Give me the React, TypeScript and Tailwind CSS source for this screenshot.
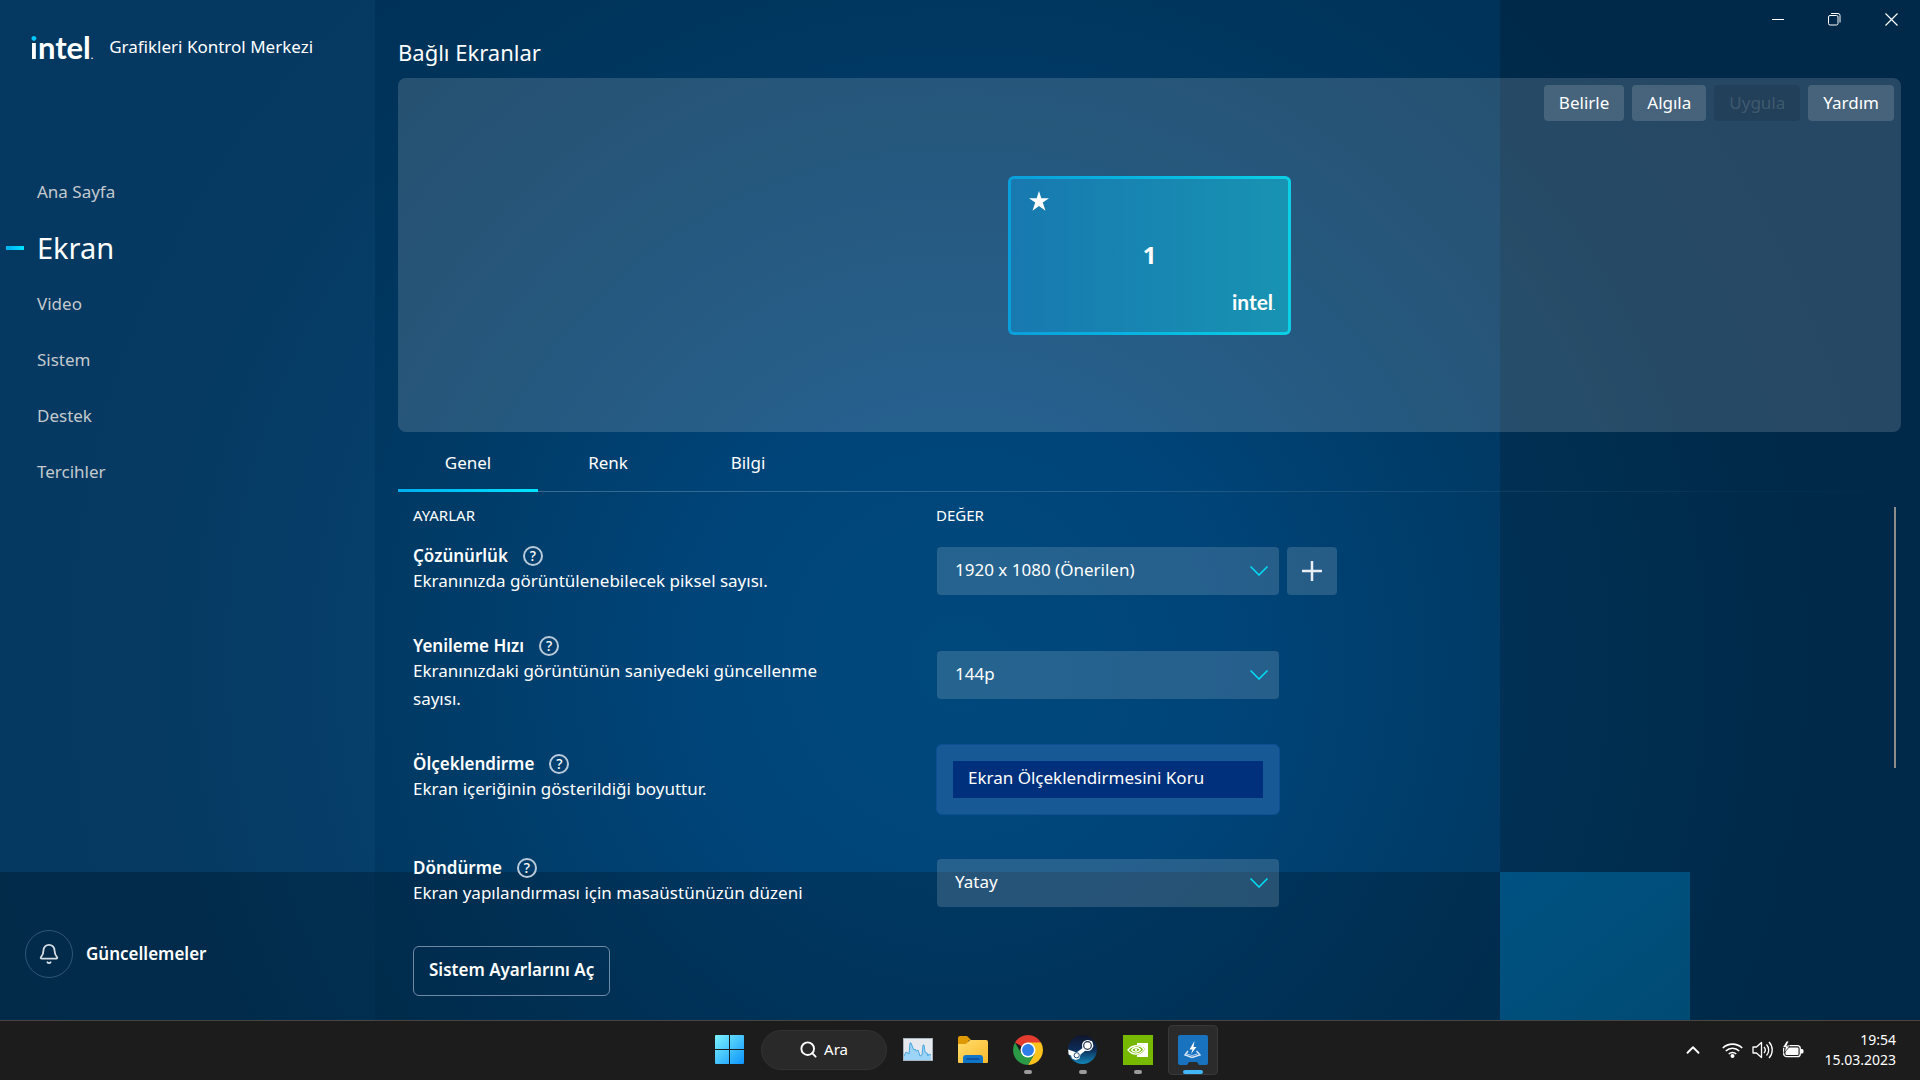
import type { ReactNode } from "react"
import { Bell, ChevronUp, Search } from "lucide-react"

type SettingRowProps = {
  id: string
  title: string
  description: string
  children: ReactNode
}

type SettingSelectProps = {
  id: string
  options: string[]
}

const NAV_ITEMS = ["Ana Sayfa", "Ekran", "Video", "Sistem", "Destek", "Tercihler"]
const TABS = ["Genel", "Renk", "Bilgi"]

function IntelLogo({ small = false }: { small?: boolean }) {
  if (small) {
    return (
      <span className="font-['Lato'] text-[21px] leading-5 font-bold text-white">
        intel<span className="text-[8px] leading-none">.</span>
      </span>
    )
  }

  return (
    <span className="font-['Lato'] text-[31px] leading-8 font-bold text-white">
      <span className="bg-[linear-gradient(#00c7fd_0_14px,#fff_14px)] bg-clip-text text-transparent">
        i
      </span>
      ntel<span className="text-[10px] leading-none">.</span>
    </span>
  )
}

function Sidebar() {
  return (
    <aside className="flex w-[375px] shrink-0 flex-col bg-[linear-gradient(rgba(30,90,140,0.18)_85.5%,rgba(30,90,140,0.06)_85.5%)]">
      <div className="mt-[31px] flex h-8 items-center gap-4 pl-[30px]">
        <IntelLogo />
        <span className="text-[17px] text-white">Grafikleri Kontrol Merkezi</span>
      </div>

      <nav className="mt-[101px]">
        {NAV_ITEMS.map((item) =>
          item === "Ekran" ? (
            <a
              key={item}
              href="#ekran"
              aria-current="page"
              className="flex h-14 items-center gap-[13px] pl-[6px] text-[29px] text-white"
            >
              <span className="h-1 w-[18px] bg-linear-to-r from-[#00aeef] to-[#00e5ff]" />
              {item}
            </a>
          ) : (
            <a
              key={item}
              href={`#${item}`}
              className="flex h-14 items-center pl-[37px] text-[17px] text-[#c4c9ce]"
            >
              {item}
            </a>
          ),
        )}
      </nav>

      <button
        type="button"
        className="mt-auto mb-[42px] ml-[25px] flex items-center gap-[13px] text-[17px] font-semibold text-white"
      >
        <span className="flex size-12 items-center justify-center rounded-full border border-[#2f5478]">
          <Bell className="size-[22px] text-[#d5dce3]" strokeWidth={2} />
        </span>
        Güncellemeler
      </button>
    </aside>
  )
}

function WindowControls() {
  return (
    <div className="flex text-white">
      <button type="button" aria-label="Simge durumuna küçült" className="flex h-[38px] w-[57px] items-center justify-center">
        <svg width="12" height="12" viewBox="0 0 12 12" stroke="currentColor">
          <path d="M0 6.5H12" />
        </svg>
      </button>
      <button type="button" aria-label="Geri yükle" className="flex h-[38px] w-[57px] items-center justify-center">
        <svg width="13" height="13" viewBox="0 0 13 13" fill="none" stroke="currentColor">
          <rect x="0.5" y="2.5" width="9.5" height="9.5" rx="1.5" />
          <path d="M3 0.5h7a2 2 0 0 1 2 2v7" />
        </svg>
      </button>
      <button type="button" aria-label="Kapat" className="flex h-[38px] w-[57px] items-center justify-center">
        <svg width="13" height="13" viewBox="0 0 13 13" stroke="currentColor" strokeWidth="1.2">
          <path d="M0.5 0.5l12 12M12.5 0.5l-12 12" />
        </svg>
      </button>
    </div>
  )
}

function DisplayPanel() {
  return (
    <section className="relative mr-[19px] ml-[23px] flex h-[354px] items-center justify-center rounded-lg bg-white/15">
      <div className="absolute top-[7px] right-[7px] flex gap-2 text-[17px] text-white">
        <button type="button" className="h-9 rounded bg-white/15 px-[15px]">
          Belirle
        </button>
        <button type="button" className="h-9 rounded bg-white/15 px-[15px]">
          Algıla
        </button>
        <button type="button" disabled className="h-9 rounded bg-black/10 px-[15px] text-white/15">
          Uygula
        </button>
        <button type="button" className="h-9 rounded bg-white/15 px-[15px]">
          Yardım
        </button>
      </div>

      <button
        type="button"
        className="h-[159px] w-[283px] rounded-md bg-linear-to-r from-[#0a9fdc] to-[#0cd0e6] p-[3px]"
      >
        <span className="flex h-full flex-col justify-between rounded-[3px] bg-linear-to-r from-[#1879b0] to-[#1893b2] px-[13px] pt-3 pb-5">
          <svg width="20" height="20" viewBox="0 0 20 20" fill="#fff" className="ml-[5px]">
            <path d="M10 0l2.3 7.2H20l-6.2 4.4 2.7 8.1L10 15l-6.5 4.7 2.7-8.1L0 7.2h7.7z" />
          </svg>
          <span className="pt-2 text-center text-2xl font-bold text-white">1</span>
          <span className="flex h-5 justify-end">
            <IntelLogo small />
          </span>
        </span>
      </button>
    </section>
  )
}

function TabBar() {
  return (
    <div className="relative mr-[19px] ml-[23px] flex h-[60px]">
      <div className="absolute right-0 bottom-0 left-0 h-px bg-linear-to-r from-white/25 to-white/0" />
      {TABS.map((tab, index) => (
        <button key={tab} type="button" className="relative w-[140px] pt-[2px] text-[17px] text-white">
          {tab}
          {index === 0 && (
            <span className="absolute right-0 bottom-0 left-0 h-[3px] bg-linear-to-r from-[#00aeef] to-[#00e5ff]" />
          )}
        </button>
      ))}
    </div>
  )
}

function SettingRow({ id, title, description, children }: SettingRowProps) {
  return (
    <div className="flex h-20 items-center">
      <div className="w-[523px] shrink-0 pr-[100px] pb-[2px]">
        <div className="flex h-[22px] items-center gap-[15px]">
          <label htmlFor={id} className="text-[17px] font-semibold">
            {title}
          </label>
          <button
            type="button"
            aria-label={`${title} yardım`}
            className="flex size-5 items-center justify-center rounded-full border-2 border-[#b9cbdb] text-sm leading-none font-medium"
          >
            ?
          </button>
        </div>
        <p className="text-[17px] leading-7">{description}</p>
      </div>
      {children}
    </div>
  )
}

function SettingSelect({ id, options }: SettingSelectProps) {
  return (
    <div className="relative w-[342px]">
      <select
        id={id}
        className="h-12 w-full appearance-none rounded bg-white/15 pr-12 pb-[2px] pl-[18px] text-[17px] text-white"
      >
        {options.map((option) => (
          <option key={option} className="bg-[#00307c]">
            {option}
          </option>
        ))}
      </select>
      <svg
        width="18"
        height="10"
        viewBox="0 0 18 10"
        fill="none"
        stroke="#00e0f8"
        strokeWidth="1.5"
        className="pointer-events-none absolute top-[19px] right-[11px]"
      >
        <path d="M0.5 0.5L9 9l8.5-8.5" />
      </svg>
    </div>
  )
}

function Settings() {
  return (
    <div className="flex flex-1">
      <div className="flex-1 pl-[38px] text-white">
        <div className="mt-[9px] flex h-[30px] items-center pb-[2px] text-[15px]">
          <span className="w-[523px]">AYARLAR</span>
          <span>DEĞER</span>
        </div>

        <div className="flex flex-col gap-6">
          <SettingRow
            id="resolution"
            title="Çözünürlük"
            description="Ekranınızda görüntülenebilecek piksel sayısı."
          >
            <div className="ml-px flex gap-2">
              <SettingSelect id="resolution" options={["1920 x 1080 (Önerilen)"]} />
              <button
                type="button"
                aria-label="Özel çözünürlük ekle"
                className="flex h-12 w-[50px] items-center justify-center rounded bg-white/15"
              >
                <svg width="20" height="20" viewBox="0 0 20 20" stroke="#e8eef4" strokeWidth="2.5">
                  <path d="M10 0v20M0 10h20" />
                </svg>
              </button>
            </div>
          </SettingRow>

          <SettingRow
            id="refresh"
            title="Yenileme Hızı"
            description="Ekranınızdaki görüntünün saniyedeki güncellenme sayısı."
          >
            <div className="ml-px">
              <SettingSelect id="refresh" options={["144p"]} />
            </div>
          </SettingRow>

          <SettingRow
            id="scaling"
            title="Ölçeklendirme"
            description="Ekran içeriğinin gösterildiği boyuttur."
          >
            <div className="w-[344px] rounded-md border border-[#0d4f95] bg-[#165995] p-4">
              <select
                id="scaling"
                className="block h-[37px] w-full appearance-none bg-[#00307c] pb-[2px] pl-[15px] text-[17px] text-white"
              >
                <option>Ekran Ölçeklendirmesini Koru</option>
              </select>
            </div>
          </SettingRow>

          <SettingRow
            id="rotation"
            title="Döndürme"
            description="Ekran yapılandırması için masaüstünüzün düzeni"
          >
            <div className="ml-px">
              <SettingSelect id="rotation" options={["Yatay"]} />
            </div>
          </SettingRow>
        </div>

        <button
          type="button"
          className="mt-[23px] mb-6 h-[50px] rounded-md border border-[#6f8aa5] px-[15px] pb-[2px] text-[17px] font-semibold"
        >
          Sistem Ayarlarını Aç
        </button>
      </div>

      {/* scrollbar thumb */}
      <div className="mt-[15px] mr-6 h-[261px] w-[2px] bg-[#8f8d8b]" />
    </div>
  )
}

function WindowsIcon() {
  return (
    <svg width="29" height="29" viewBox="0 0 29 29">
      <defs>
        <linearGradient id="win" x1="0" y1="0" x2="1" y2="1" gradientUnits="objectBoundingBox">
          <stop offset="0" stopColor="#7df3ff" />
          <stop offset="1" stopColor="#0c94fb" />
        </linearGradient>
      </defs>
      <path fill="url(#win)" d="M1 0h13v14H0V1a1 1 0 0 1 1-1zM15 0h13a1 1 0 0 1 1 1v13H15zM0 15h14v14H1a1 1 0 0 1-1-1zM15 15h14v13a1 1 0 0 1-1 1H15z" />
    </svg>
  )
}

function MonitorIcon() {
  return (
    <svg width="30" height="23" viewBox="0 0 30 23">
      <rect width="30" height="23" fill="#a9b3bc" />
      <rect x="1" y="1" width="28" height="21" fill="#e6eaef" />
      <path d="M1 22v-4l2-4 2 1 1 1 1-11h1l2 5 1 2 1-1 1 2 2-1 1 3 1 3 2-1 1-10h1l1 7 2 1 1 3 1-2 2 1v5z" fill="#9bd4f7" />
      <path d="M1 18l2-4 2 1 1 1 1-11h1l2 5 1 2 1-1 1 2 2-1 1 3 1 3 2-1 1-10h1l1 7 2 1 1 3 1-2 2 1" fill="none" stroke="#4ba7e0" />
    </svg>
  )
}

function ExplorerIcon() {
  return (
    <svg width="30" height="28" viewBox="0 0 30 28">
      <defs>
        <linearGradient id="folder" x1="0" y1="0" x2="1" y2="1">
          <stop offset="0" stopColor="#ffdc6b" />
          <stop offset="1" stopColor="#fbba2d" />
        </linearGradient>
      </defs>
      <path d="M0 2a2 2 0 0 1 2-2h7l4 4h-2L9 9H0z" fill="#dd9a05" />
      <path d="M0 8h8l4-4h16a2 2 0 0 1 2 2v20a1 1 0 0 1-1 1H1a1 1 0 0 1-1-1z" fill="url(#folder)" />
      <path d="M5 27v-5a3 3 0 0 1 3-3h14a3 3 0 0 1 3 3v5z" fill="#0f75c8" />
      <path d="M9 23h12" stroke="#0a4a94" strokeWidth="1.4" strokeLinecap="round" />
    </svg>
  )
}

function ChromeIcon() {
  return (
    <svg width="30" height="30" viewBox="0 0 48 48">
      <path d="M24 24L3.22 12A24 24 0 0 1 44.78 12z" fill="#e33b2e" />
      <path d="M24 12h20.78A24 24 0 0 1 24 48l10.39-18z" fill="#fcc31e" />
      <path d="M34.39 30L24 48A24 24 0 0 1 3.22 12l10.39 18z" fill="#2a9a47" />
      <circle cx="24" cy="24" r="12" fill="#fff" />
      <circle cx="24" cy="24" r="9.5" fill="#2f7de9" />
    </svg>
  )
}

function SteamIcon() {
  return (
    <svg width="29" height="29" viewBox="0 0 29 29">
      <defs>
        <linearGradient id="steam" x1="0" y1="0" x2="0" y2="1">
          <stop offset="0" stopColor="#10152c" />
          <stop offset="0.5" stopColor="#0c2c58" />
          <stop offset="1" stopColor="#1387b8" />
        </linearGradient>
      </defs>
      <circle cx="14.5" cy="14.5" r="14.5" fill="url(#steam)" />
      <path d="M0.2 14.5L8.5 17.5l5.5-4 5-8 5 0.5 1.5 5-3 4-5 0.5-5 4-1 4-3.5 1.5-4-1.5-1-3-2.4-1z" fill="#fff" />
      <circle cx="19.5" cy="10.5" r="5.5" fill="#fff" />
      <circle cx="19.5" cy="10.5" r="3.8" fill="none" stroke="#1b2c50" strokeWidth="1.2" />
      <circle cx="8.7" cy="20.3" r="2.6" fill="none" stroke="#1b4a78" />
    </svg>
  )
}

function NvidiaIcon() {
  return (
    <svg width="30" height="30" viewBox="0 0 30 30">
      <rect width="30" height="30" fill="#76b900" />
      <path d="M14 8h11v14H14z" fill="#fff" />
      <path d="M5 15c4-6 12-7 17-1-4 7-12 8-17 1z" fill="#76b900" />
      <path d="M5 15c4-5 11-6 16-1-4 6-11 7-16 1z" fill="none" stroke="#fff" strokeWidth="1.3" />
      <path d="M8.5 15c2-3 6-3.5 9-0.5-2.5 3.5-6.5 3.5-9 0.5z" fill="none" stroke="#fff" strokeWidth="1.3" />
      <circle cx="13" cy="14.7" r="1.2" fill="#fff" />
    </svg>
  )
}

function GraphicsIcon() {
  return (
    <svg width="30" height="30" viewBox="0 0 30 30">
      <path d="M2 0h26a2 2 0 0 1 2 2v26a2 2 0 0 1-2 2h-7l-2-3h-8l-2 3H2a2 2 0 0 1-2-2V2a2 2 0 0 1 2-2z" fill="#1872bd" />
      <path d="M16.5 6l-5 8.5h3L13 19l5.5-7h-3z" fill="#fff" />
      <path d="M10 16l-3 4 7 2.5 8-2.5-3.5-4" fill="none" stroke="#dbe9f6" strokeWidth="1.4" />
      <path d="M9 19l5 1.5 5.5-1.5" fill="none" stroke="#a9cbea" />
    </svg>
  )
}

const APPS = [
  { name: "Görev Yöneticisi", icon: <MonitorIcon />, state: "closed" },
  { name: "Dosya Gezgini", icon: <ExplorerIcon />, state: "closed" },
  { name: "Google Chrome", icon: <ChromeIcon />, state: "running" },
  { name: "Steam", icon: <SteamIcon />, state: "running" },
  { name: "NVIDIA", icon: <NvidiaIcon />, state: "running" },
  { name: "Intel Grafikleri", icon: <GraphicsIcon />, state: "active" },
]

function Tray() {
  return (
    <div className="flex items-center justify-end pr-6 text-white">
      <button type="button" aria-label="Gizli simgeler" className="mr-[18px]">
        <ChevronUp className="size-[22px]" strokeWidth={2} />
      </button>
      <button type="button" aria-label="Ağ, ses ve pil" className="flex items-center gap-[9px]">
        <svg width="21" height="16" viewBox="0 0 21 16" fill="none" stroke="#fff" strokeWidth="1.6">
          <path d="M0.8 6a14 14 0 0 1 19.4 0M3.8 9a9.5 9.5 0 0 1 13.4 0M6.8 12a5.2 5.2 0 0 1 7.4 0" />
          <circle cx="10.5" cy="14" r="1.2" fill="#fff" />
        </svg>
        <svg width="21" height="18" viewBox="0 0 21 18" fill="none" stroke="#fff" strokeWidth="1.3">
          <path d="M1 6h3.5L9.5 1.5v15L4.5 12H1z" strokeLinejoin="round" />
          <path d="M12 6a4.5 4.5 0 0 1 0 6M14.5 3.5a8 8 0 0 1 0 11M17 1a11.5 11.5 0 0 1 0 16" />
        </svg>
        <svg width="22" height="17" viewBox="0 0 22 17">
          <rect x="1.7" y="4.7" width="16.6" height="11" rx="3" fill="none" stroke="#fff" strokeWidth="1.3" />
          <rect x="3.5" y="6.5" width="13" height="7.5" rx="1" fill="#fff" />
          <path d="M19 8h1a1.5 1.5 0 0 1 1.5 1.5v1.5a1.5 1.5 0 0 1-1.5 1.5h-1z" fill="#fff" />
          <path d="M4.5 0L0.5 6.5h3L2 12l6-7H4.8L7 0z" fill="#fff" stroke="#1c1c1c" strokeWidth="0.8" />
        </svg>
      </button>
      <time className="ml-5 text-right text-[14px] leading-5">
        19:54
        <br />
        15.03.2023
      </time>
    </div>
  )
}

function Taskbar() {
  return (
    <footer className="grid h-[60px] grid-cols-[1fr_auto_1fr] border-t border-[#454545] bg-[#1c1c1c] pb-[2px]">
      <div />
      <div className="flex items-center gap-[5px] pl-[2px]">
        <button type="button" aria-label="Başlat" className="flex size-[50px] items-center justify-center">
          <WindowsIcon />
        </button>
        <button
          type="button"
          className="mx-px flex h-10 w-[126px] items-center justify-center gap-[6px] rounded-full border border-[#323232] bg-[#292929] text-[15px] text-white"
        >
          <Search className="size-[19px]" strokeWidth={2.4} />
          Ara
        </button>
        {APPS.map((app) => (
          <button
            key={app.name}
            type="button"
            aria-label={app.name}
            className={
              app.state === "active"
                ? "relative flex size-[50px] items-center justify-center rounded border border-[#383838] bg-[#2b2b2b]"
                : "relative flex size-[50px] items-center justify-center"
            }
          >
            {app.icon}
            {app.state === "running" && (
              <span className="absolute bottom-px h-1 w-2 rounded-full bg-[#9b9b9b]" />
            )}
            {app.state === "active" && (
              <span className="absolute bottom-0 h-1 w-5 rounded-full bg-[#42b5f7]" />
            )}
          </button>
        ))}
      </div>
      <Tray />
    </footer>
  )
}

export default function App() {
  return (
    <div className="flex min-h-screen flex-col font-['Noto_Sans',sans-serif]">
      <div className="relative isolate flex flex-1 bg-[radial-gradient(circle_at_50%_65%,#00497d_0,#00457a_250px,#003a65_560px,#003359_800px,#003157_1100px)]">
        {/* shaded background tiles */}
        <div className="absolute inset-0 -z-10 grid grid-cols-[1500fr_190fr_230fr] grid-rows-[872fr_148fr]">
          <div />
          <div className="col-span-2 bg-black/16" />
          <div className="bg-black/20" />
          <div className="bg-linear-to-br from-[#005282] to-[#004b74]" />
          <div className="bg-black/16" />
        </div>

        <Sidebar />

        <main className="flex min-w-0 flex-1 flex-col">
          <header className="flex h-[78px] items-start justify-between pl-[23px]">
            <h1 className="mt-9 text-[22px] leading-8 text-white">Bağlı Ekranlar</h1>
            <WindowControls />
          </header>
          <DisplayPanel />
          <TabBar />
          <Settings />
        </main>
      </div>

      <Taskbar />
    </div>
  )
}
